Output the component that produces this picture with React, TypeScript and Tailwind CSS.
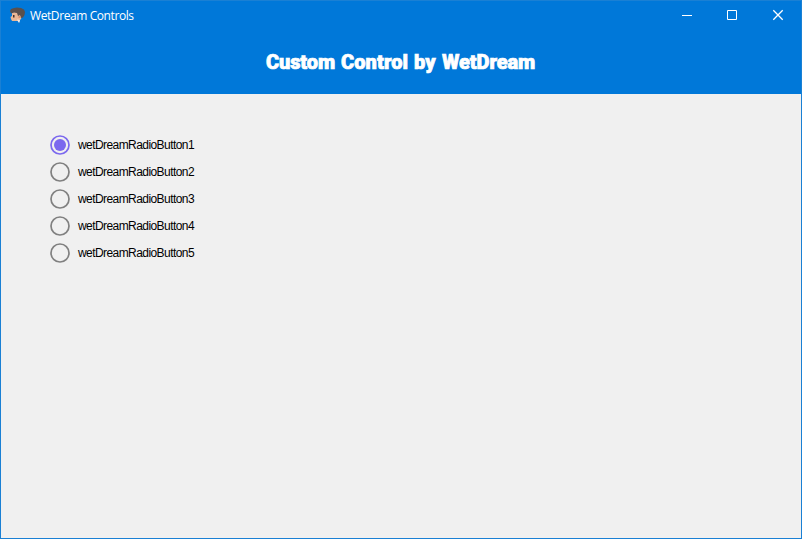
const options = [1, 2, 3, 4, 5];

function AppIcon() {
  return (
    <svg width="17" height="17" viewBox="0 0 17 17" className="shrink-0">
      <path d="M3 6 L5 5 L12 6 L13 9 L12 12 L10 14 L6 14 L3 14 L2 12 L1.500 10 L3 9Z" fill="#e9b795" />
      <path d="M1 4 L2 2 L5 1 L8 0.500 L12 1 L15 2.500 L16 5 L15.500 8 L14 10.500 L12 11 L11 8 L9 9 L8 6 L5 5.500 L2 6.500Z" fill="#5a504d" />
      <path d="M4 8h1.500v2.500H4z" fill="#44312e" />
      <path d="M9.500 9h2v2h-2z" fill="#d99170" />
      <path d="M8 12.500 L11 13 L10.500 15.500 L9.500 15.500Z" fill="#f1e9e5" />
    </svg>
  );
}

function TitleBar() {
  return (
    <div className="flex h-[29px] items-center pl-2">
      <AppIcon />
      <span className="ml-1 font-['Open_Sans','Noto_Sans',sans-serif] text-[12px] leading-4 tracking-[-0.41px] text-white">
        WetDream Controls
      </span>
      <div className="ml-auto flex h-full pb-[2px] text-white">
        {["min", "max", "close"].map((kind) => (
          <button key={kind} aria-label={kind} className="flex h-full w-[46px] items-center justify-center">
            <svg width="12" height="12" viewBox="0 0 12 12" fill="none" stroke="currentColor">
              {kind === "min" && <path d="M2 6.500h10" />}
              {kind === "max" && <path d="M1.500 1.500h9v9h-9z" />}
              {kind === "close" && <path d="M1.300 1.300l9.400 9.400M10.700 1.300L1.300 10.700" strokeWidth="1.300" />}
            </svg>
          </button>
        ))}
      </div>
    </div>
  );
}

export default function App() {
  return (
    <div className="flex h-[539px] w-[802px] flex-col border border-[#1a80d4] bg-[#f0f0f0]">
      <header className="h-[93px] shrink-0 bg-[#0078d9]">
        <TitleBar />
        <h1 className="ml-[265px] mt-[16px] flex font-['Roboto',sans-serif] text-[20px] font-black leading-8 text-white [-webkit-text-stroke:0.7px_white]">
          <span className="w-[75px] tracking-[-0.1px]">Custom</span>
          <span className="w-[73px] tracking-[0.1px]">Control</span>
          <span className="w-[28px]">by</span>
          <span className="tracking-[-0.1px]">WetDream</span>
        </h1>
      </header>
      <main className="flex flex-col gap-[7px] pl-[49px] pt-[41px]">
        {options.map((n) => (
          <label key={n} className="flex h-5 items-center gap-2">
            <svg width="20" height="20" viewBox="0 0 20 20" fill="none">
              <circle cx="10" cy="10" r="9" stroke={n === 1 ? "#7b68ee" : "#808080"} strokeWidth="1.700" />
              {n === 1 && <circle cx="10" cy="10" r="6" fill="#7b68ee" />}
            </svg>
            <span className="font-['Liberation_Sans',sans-serif] text-[12px] leading-5 tracking-[-0.57px] text-black">
              wetDreamRadioButton{n}
            </span>
          </label>
        ))}
      </main>
    </div>
  );
}
